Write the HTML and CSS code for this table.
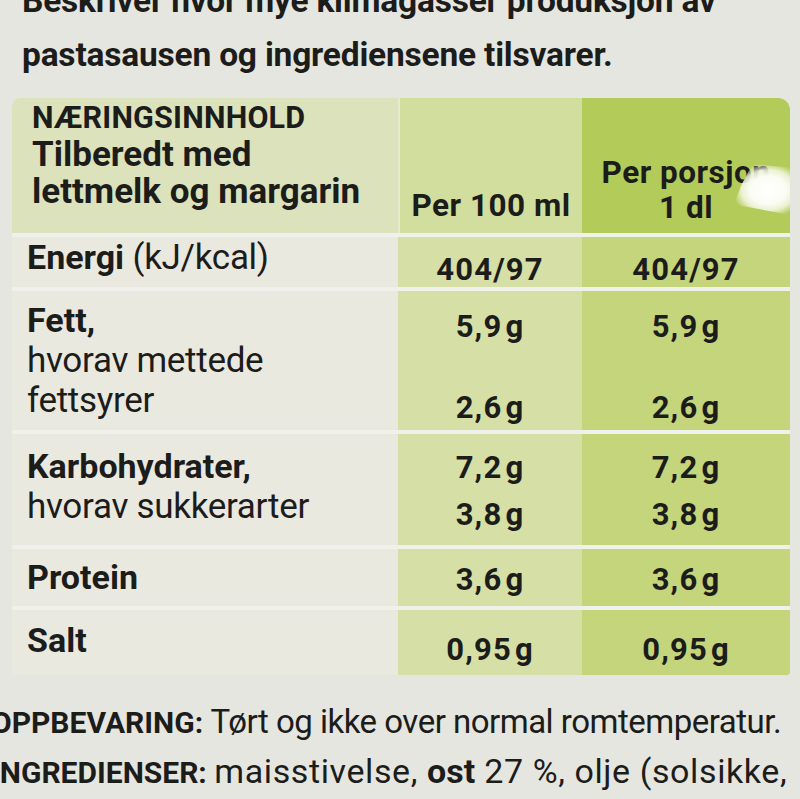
FILE: index.html
```html
<!DOCTYPE html>
<html lang="no">
<head>
<meta charset="utf-8">
<title>Næringsinnhold</title>
<link rel="stylesheet" href="styles.css">
</head>
<body>
<main class="pack">
  <p class="intro">
    <span class="intro-line">Beskriver hvor mye klimagasser produksjon av</span>
    <span class="intro-line">pastasausen og ingrediensene tilsvarer.</span>
  </p>

  <div class="nutrition">
    <div class="cell c1 head head-1">
      <span class="title">NÆRINGSINNHOLD</span>
      <span class="line">Tilberedt med</span>
      <span class="line">lettmelk og margarin</span>
    </div>
    <div class="cell c2 head head-2"><span class="hv">Per 100 ml</span></div>
    <div class="cell c3 head head-3"><span class="hv">Per porsjon</span><span class="hv">1 dl</span></div>

    <div class="cell c1 lab r-energi"><span class="line"><b>Energi</b> (kJ/kcal)</span></div>
    <div class="cell c2 val r-energi-v"><span class="v">404/97</span></div>
    <div class="cell c3 val r-energi-v"><span class="v">404/97</span></div>

    <div class="cell c1 lab r-fett"><span class="line"><b>Fett,</b></span><span class="line">hvorav mettede</span><span class="line">fettsyrer</span></div>
    <div class="cell c2 val r-fett-v"><span class="v">5,9<span class="u">g</span></span><span class="v v-fett2">2,6<span class="u">g</span></span></div>
    <div class="cell c3 val r-fett-v"><span class="v">5,9<span class="u">g</span></span><span class="v v-fett2">2,6<span class="u">g</span></span></div>

    <div class="cell c1 lab r-karbo"><span class="line"><b>Karbohydrater,</b></span><span class="line">hvorav sukkerarter</span></div>
    <div class="cell c2 val r-karbo-v"><span class="v">7,2<span class="u">g</span></span><span class="v v-karbo2">3,8<span class="u">g</span></span></div>
    <div class="cell c3 val r-karbo-v"><span class="v">7,2<span class="u">g</span></span><span class="v v-karbo2">3,8<span class="u">g</span></span></div>

    <div class="cell c1 lab r-protein"><span class="line"><b>Protein</b></span></div>
    <div class="cell c2 val r-protein-v"><span class="v">3,6<span class="u">g</span></span></div>
    <div class="cell c3 val r-protein-v"><span class="v">3,6<span class="u">g</span></span></div>

    <div class="cell c1 lab r-salt"><span class="line"><b>Salt</b></span></div>
    <div class="cell c2 val r-salt-v"><span class="v">0,95<span class="u">g</span></span></div>
    <div class="cell c3 val r-salt-v"><span class="v">0,95<span class="u">g</span></span></div>
  </div>

  <div class="info">
    <p class="info-line info-store"><b>OPPBEVARING:</b> <span class="reg">Tørt og ikke over normal romtemperatur.</span></p>
    <p class="info-line info-ingr"><b>INGREDIENSER:</b> <span class="reg">maisstivelse, <b>ost</b> 27 %, olje (solsikke,</span></p>
  </div>
</main>
</body>
</html>
```

FILE: styles.css
```css
html, body {
  margin: 0;
  padding: 0;
}

body {
  width: 800px;
  height: 799px;
  overflow: hidden;
  background: #e6e6e0;
  color: #1c1c1a;
  font-family: Roboto, "Liberation Sans", sans-serif;
}

.pack {
  display: flex;
  flex-direction: column;
}

.intro {
  margin: -26px 0 0 22px;
  font-size: 33.5px;
  font-weight: 700;
  line-height: 54px;
  letter-spacing: -0.2px;
}

.intro-line {
  display: block;
  white-space: nowrap;
}

.nutrition {
  margin: 16px 0 0 12px;
  width: 778px;
  display: grid;
  grid-template-columns: 386px 184px 208px;
  grid-template-rows: 135px 50px 139px 111px 57px 65px;
  row-gap: 4px;
  background: #f1f1ec;
  border-radius: 8px 12px 3px 3px;
  overflow: hidden;
}

.cell {
  display: flex;
  flex-direction: column;
  box-sizing: border-box;
}

.c1 { background: #eae9e0; padding-left: 15px; }
.c2 { background: #d5dfa6; align-items: center; }
.c3 { background: #c4d57c; align-items: center; }

.head.c1 { background: #dbe2bc; padding-top: 1px; padding-left: 20px; }
.head.c2 { background: #d2de9d; justify-content: flex-end; padding-bottom: 10px; border-left: 2px solid #e6ead0; }
.head.c3 { background: #b3cb58; justify-content: flex-end; padding-bottom: 8px; position: relative; }

.head-3::after {
  content: "";
  position: absolute;
  right: -6px;
  top: 66px;
  width: 62px;
  height: 52px;
  background: radial-gradient(ellipse at 55% 50%, #ffffff 0%, #fbfcf4 38%, rgba(245, 248, 230, 0.85) 55%, rgba(200, 215, 130, 0) 75%);
  clip-path: polygon(30% 0, 100% 8%, 100% 100%, 0 78%, 12% 40%);
}

.head .title {
  font-size: 30.5px;
  font-weight: 700;
  line-height: 37px;
  letter-spacing: 0.2px;
}

.head .line {
  font-size: 35px;
  font-weight: 700;
  line-height: 37px;
  white-space: nowrap;
}

.hv {
  font-size: 31.5px;
  font-weight: 700;
  line-height: 35px;
  letter-spacing: 0.5px;
  white-space: nowrap;
}

.lab .line {
  font-size: 35px;
  line-height: 40px;
  font-weight: 400;
  white-space: nowrap;
  letter-spacing: -0.3px;
}

.lab b {
  font-weight: 700;
  font-size: 34px;
  letter-spacing: 0;
}

.v {
  font-size: 31px;
  font-weight: 700;
  line-height: 40px;
  letter-spacing: 1.2px;
  white-space: nowrap;
}

.u {
  margin-left: 3px;
}

.r-energi { padding-top: 0; }
.r-energi-v { padding-top: 13px; }
.r-fett { padding-top: 9px; }
.r-fett-v { padding-top: 16px; }
.v-fett2 { margin-top: 41px; }
.r-karbo { padding-top: 12px; }
.r-karbo-v { padding-top: 14px; }
.v-karbo2 { margin-top: 7px; }
.r-protein { padding-top: 8px; }
.r-protein-v { padding-top: 11px; }
.r-salt { padding-top: 10px; }
.r-salt-v { padding-top: 20px; }

.info {
  margin: 23px 0 0 -9px;
}

.info-line {
  margin: 0;
  font-size: 30px;
  line-height: 48px;
  white-space: nowrap;
}

.info-line b {
  font-weight: 700;
  letter-spacing: 0;
}

.info-line .reg {
  font-size: 33px;
}

.info-store .reg {
  letter-spacing: -0.5px;
}

.info-ingr .reg {
  font-size: 34px;
  letter-spacing: 0.6px;
}

.info-line .reg b {
  letter-spacing: 0;
}
```
